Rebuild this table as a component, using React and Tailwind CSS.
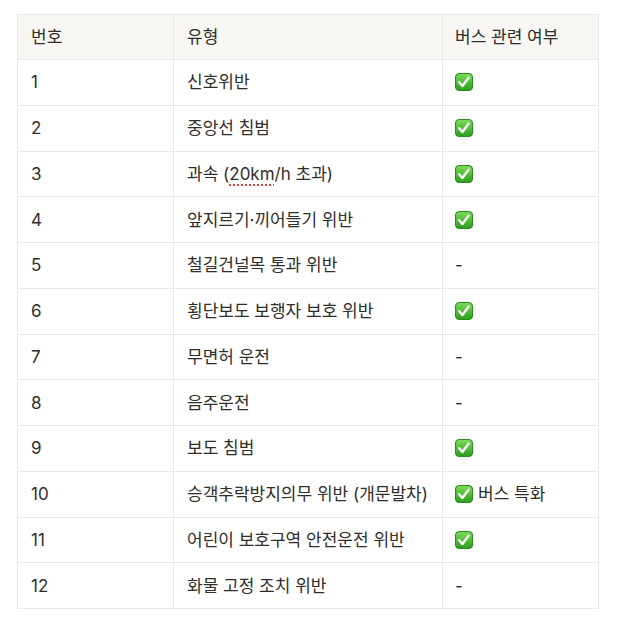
import React from 'react';

const rows = [
  { no: '1', type: '신호위반', bus: 'check' },
  { no: '2', type: '중앙선 침범', bus: 'check' },
  { no: '3', type: 'speed', bus: 'check' },
  { no: '4', type: '앞지르기·끼어들기 위반', bus: 'check' },
  { no: '5', type: '철길건널목 통과 위반', bus: '-' },
  { no: '6', type: '횡단보도 보행자 보호 위반', bus: 'check' },
  { no: '7', type: '무면허 운전', bus: '-' },
  { no: '8', type: '음주운전', bus: '-' },
  { no: '9', type: '보도 침범', bus: 'check' },
  { no: '10', type: '승객추락방지의무 위반 (개문발차)', bus: 'special' },
  { no: '11', type: '어린이 보호구역 안전운전 위반', bus: 'check' },
  { no: '12', type: '화물 고정 조치 위반', bus: '-' },
];

// ✅ 이모지 대신 그린 체크박스
function CheckBox() {
  return (
    <svg width="18" height="18" viewBox="0 0 18 18" className="inline-block shrink-0">
      <defs>
        <linearGradient id="gb" x1="0" y1="0" x2="0" y2="1">
          <stop offset="0" stopColor="#7ddc5a" />
          <stop offset="1" stopColor="#2a9e1c" />
        </linearGradient>
      </defs>
      <rect x="0.5" y="0.5" width="17" height="17" rx="3.5" fill="url(#gb)" stroke="#2b8c1d" strokeWidth="1" />
      <path d="M4.2 9.2 L7.4 13 L13.6 4.6" fill="none" stroke="#ffffff" strokeWidth="2.4" strokeLinecap="round" strokeLinejoin="round" />
    </svg>
  );
}

function BusCell({ v }) {
  if (v === 'check') return <CheckBox />;
  if (v === 'special')
    return (
      <span className="inline-flex items-center gap-[5px]">
        <CheckBox />
        버스 특화
      </span>
    );
  return <span>-</span>;
}

function TypeCell({ v }) {
  if (v === 'speed')
    return (
      <span>
        과속 (<span className="underline decoration-dotted decoration-[#e0443e] decoration-[1.5px] underline-offset-[5px]">20km</span>/h 초과)
      </span>
    );
  return <span>{v}</span>;
}

export default function App() {
  return (
    <div
      className="min-h-screen bg-white pt-[14px] pl-[17px] text-[17px] leading-[24px] text-[#2f2e2a]"
      style={{ fontFamily: 'Inter, "Noto Sans CJK KR", sans-serif' }}
    >
      <table className="w-[581px] table-fixed border-collapse">
        <colgroup>
          <col className="w-[156px]" />
          <col className="w-[269px]" />
          <col className="w-[156px]" />
        </colgroup>
        <thead>
          <tr className="bg-[#f7f6f3]">
            <th className="h-[45px] border border-[#e9e9e7] px-[13px] text-left font-normal">번호</th>
            <th className="h-[45px] border border-[#e9e9e7] px-[13px] text-left font-normal">유형</th>
            <th className="h-[45px] border border-[#e9e9e7] px-[12px] text-left font-normal">버스 관련 여부</th>
          </tr>
        </thead>
        <tbody>
          {rows.map((r) => (
            <tr key={r.no}>
              <td className="h-[45.75px] border border-[#e9e9e7] px-[13px]">{r.no}</td>
              <td className="h-[45.75px] border border-[#e9e9e7] px-[13px] whitespace-nowrap">
                <TypeCell v={r.type} />
              </td>
              <td className="h-[45.75px] border border-[#e9e9e7] px-[12px] align-middle">
                <div className="flex items-center">
                  <BusCell v={r.bus} />
                </div>
              </td>
            </tr>
          ))}
        </tbody>
      </table>
    </div>
  );
}
